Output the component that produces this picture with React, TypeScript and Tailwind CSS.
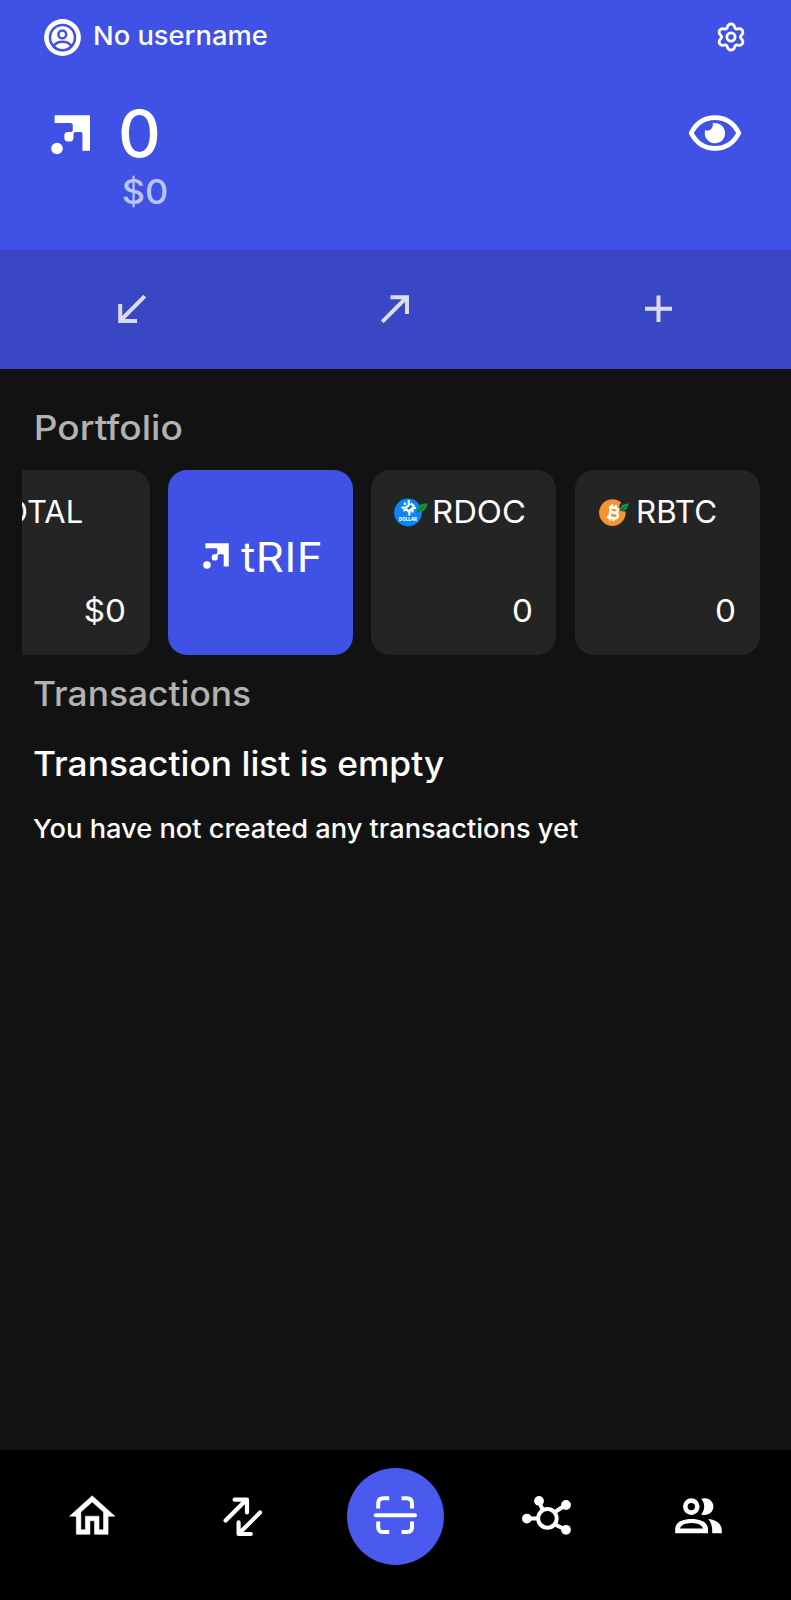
import type { ReactNode } from "react";

function RifLogo({ className }: { className: string }) {
  return (
    <svg viewBox="0 0 118 118" className={className} fill="white">
      <path d="M11 1H117V107H94V56Q94 51 89 51H74Q67 51 67 58V69Q67 79 57 79H50Q40 79 40 69V61Q40 51 50 51H57Q65 51 65 43V30Q65 24 59 24H11Z" />
      <circle cx="18" cy="100" r="17.3" />
    </svg>
  );
}

function Avatar() {
  return (
    <svg viewBox="0 0 37 37" className="size-[37px]" fill="none" stroke="#4051e5">
      <circle cx="18.5" cy="18.5" r="18.4" fill="white" stroke="none" />
      <circle cx="18.5" cy="18.5" r="12.5" strokeWidth="2.5" />
      <circle cx="18.3" cy="15.4" r="3.9" strokeWidth="2.5" />
      <path d="M9.8 26.6C12 23.8 15 22.7 18.5 22.7S25 23.8 27.2 26.6" strokeWidth="2.4" />
      <path d="M12 28Q18.5 24.4 25 28L23.4 30H13.6Z" fill="white" stroke="none" />
      <path d="M8.8 26.6A12.5 12.5 0 0 0 28.2 26.6" strokeWidth="2.5" />
    </svg>
  );
}

const gearPath =
  Array.from({ length: 73 }, (_, i) => {
    const a = (i / 72) * Math.PI * 2;
    const r = 11.5 + 1.9 * Math.cos(6 * a) - 0.25 * Math.cos(12 * a);
    return `${i ? "L" : "M"}${(16 + r * Math.sin(a)).toFixed(2)} ${(16 - r * Math.cos(a)).toFixed(2)}`;
  }).join("") + "Z";

function Gear() {
  return (
    <svg viewBox="0 0 32 32" className="mr-[1px] mb-[1px] size-8" fill="none" stroke="white" strokeWidth="2.8" strokeLinejoin="round">
      <path d={gearPath} />
      <circle cx="16" cy="16" r="4.1" />
    </svg>
  );
}

function Eye() {
  return (
    <svg viewBox="0 0 54 38" className="h-[38px] w-[54px]">
      <path
        d="M3.2 19C8 9.5 16.5 3.6 27 3.6S46 9.5 50.8 19C46 28.5 37.5 34.4 27 34.4S8 28.5 3.2 19Z"
        fill="none"
        stroke="white"
        strokeWidth="4.8"
        strokeLinejoin="round"
      />
      <path d="M24.6 9.2A10.2 10.2 0 1 1 17.2 16C20.6 18.2 26.2 14.2 24.6 9.2Z" fill="white" />
    </svg>
  );
}

function DocCoin() {
  return (
    <svg viewBox="0 0 34 30" className="h-[30px] w-[34px]">
      <circle cx="14" cy="15.5" r="13.9" fill="#0b86f5" />
      <g fill="none" stroke="white" strokeWidth="2.2">
        <path d="M14.8 3V8L11.2 11.2M7.5 10.6H12M20.5 9.6L16.6 6.4M11 5.5V8M9 13.5L13 12.6L15 15M15.4 18.5V14L19.5 10.6M18.6 15.5V12.4M22 11H18" />
      </g>
      <text x="14" y="24" textAnchor="middle" textLength="18" lengthAdjust="spacingAndGlyphs" fontSize="5" fontWeight="800" fill="white">
        DOLLAR
      </text>
      <path d="M23.8 14.4C23 8.8 26.5 6.6 33.4 6.2C32.6 12.4 29.3 15.6 23.8 14.4Z" fill="#129a36" />
      <path d="M23 15.6L30.4 8.6" stroke="#07501c" strokeWidth="1" />
    </svg>
  );
}

function BtcCoin() {
  return (
    <svg viewBox="0 0 30 28" className="h-[28px] w-[30px]">
      <circle cx="13.4" cy="14.6" r="13.3" fill="#f69432" />
      <g fill="none" stroke="white" transform="rotate(10 13.6 14.6)">
        <path d="M9 9.4H15.2C19.2 9.4 19.2 14.4 15.2 14.4H11.6H15.8C20.4 14.4 20.4 20 15.8 20H8.6M11.2 9.4V20" strokeWidth="2.5" />
        <path d="M12 6.4V9.4M15.6 6.4V9.4M12 20V23M15.6 20V23" strokeWidth="1.9" />
      </g>
      <circle cx="25.5" cy="8.6" r="5" fill="#242424" />
      <path d="M21.6 12.4C21 7.8 23.8 6.1 29.6 5.6C28.8 10.8 26.2 13.4 21.6 12.4Z" fill="#129a4a" />
      <path d="M21.2 13L27.2 7.4" stroke="#07501c" strokeWidth="1" />
    </svg>
  );
}

function Action({ label, d }: { label: string; d: string }) {
  return (
    <button aria-label={label} className="flex flex-1 items-center justify-center">
      <svg viewBox="0 0 32 32" className="size-8" fill="none" stroke="#dadcf0" strokeWidth="4">
        <path d={d} />
      </svg>
    </button>
  );
}

function TokenCard({ icon, name, value, className }: { icon?: ReactNode; name: ReactNode; value: string; className: string }) {
  return (
    <div className={`flex h-[185px] w-[185px] shrink-0 flex-col justify-between rounded-[19px] bg-[#242424] pt-[22px] pr-[23.5px] pb-[24px] text-[31px] leading-[40px] ${className}`}>
      <div className="flex items-center">
        {icon}
        {name}
      </div>
      <div className="origin-right scale-x-[1.07] text-right">{value}</div>
    </div>
  );
}

function NavItem({ label, children }: { label: string; children: ReactNode }) {
  return (
    <button aria-label={label} className="flex flex-1 items-center justify-center">
      {children}
    </button>
  );
}

export default function App() {
  return (
    <div className="flex h-[1600px] w-full flex-col overflow-hidden bg-[#121212] font-['Inter',sans-serif] text-white">
      <header className="h-[250px] bg-[#4051e5]">
        <div className="flex h-[75px] items-center justify-between pr-[43px] pl-[44px]">
          <div className="flex items-center">
            <Avatar />
            <span className="mb-1 ml-[11.5px] origin-left scale-x-[1.05] text-[26px] leading-[36px] font-medium">No username</span>
          </div>
          <Gear />
        </div>
        <div className="flex items-start justify-between pr-[49px] pl-[50.5px]">
          <div className="flex">
            <RifLogo className="mt-[40px] size-[39.5px]" />
            <div className="ml-[27.5px] pt-[18.5px]">
              <div className="origin-left scale-x-[1.04] text-[64px] leading-[80px] font-medium">0</div>
              <div className="-mt-[2px] origin-left scale-x-[1.06] pl-[3.5px] text-[34px] leading-[40px] font-medium text-[#bcc3fb]">$0</div>
            </div>
          </div>
          <div className="mt-[39px]">
            <Eye />
          </div>
        </div>
      </header>

      <div className="flex h-[119px] bg-[#3a47c4] pb-[2px]">
        <Action label="Receive" d="M28.8 3.2L5 27M4.2 11V28H21" />
        <Action label="Send" d="M2.2 28.8L26 5M10.5 4.2H27V21" />
        <Action label="Add" d="M15.5 2.5V29M2 15.7H29" />
      </div>

      <main className="flex-1 pt-[36px]">
        <h2 className="origin-left scale-x-[1.09] pl-[31px] text-[34px] leading-[46px] font-medium text-[#b2b2b2]">Portfolio</h2>
        <div className="mt-[18.5px] ml-[22px] overflow-hidden">
          <div className="-ml-[57.4px] flex gap-[18.4px]">
            <TokenCard className="pl-[20.5px]" name="TOTAL" value="$0" />
            <div className="flex h-[185px] w-[185px] shrink-0 items-center rounded-[19px] bg-[#4051e5] pb-[12px] pl-[34.5px]">
              <RifLogo className="size-[26px]" />
              <span className="mt-[3px] ml-[12px] origin-left scale-x-[1.07] text-[41px] tracking-[0.4px]">tRIF</span>
            </div>
            <TokenCard
              className="pl-[22.5px]"
              icon={<DocCoin />}
              name={<span className="ml-[4px] origin-left scale-x-[1.06]">RDOC</span>}
              value="0"
            />
            <TokenCard
              className="pl-[24.5px]"
              icon={<span className="mt-[1px]"><BtcCoin /></span>}
              name={<span className="ml-[6.5px] origin-left scale-x-[1.01]">RBTC</span>}
              value="0"
            />
          </div>
        </div>
        <div className="pl-[33px] font-medium">
          <h2 className="mt-[16px] origin-left scale-x-[1.04] text-[34px] leading-[46px] text-[#b2b2b2]">Transactions</h2>
          <h3 className="mt-[24px] origin-left scale-x-[1.04] text-[34px] leading-[46px]">Transaction list is empty</h3>
          <p className="mt-[22.5px] origin-left scale-x-[1.047] text-[26px] leading-[40px]">You have not created any transactions yet</p>
        </div>
      </main>

      <nav className="flex h-[150px] bg-black px-4 pb-[17px]">
        <NavItem label="Home">
          <svg viewBox="0 0 24 24" className="size-[54.4px]" fill="white" stroke="white" strokeWidth="0.25">
            <path d="M12 5.69l5 4.5V18h-2v-6H9v6H7v-7.81l5-4.5M12 3L2 12h3v8h6v-6h2v6h6v-8h3L12 3z" />
          </svg>
        </NavItem>
        <NavItem label="Transactions">
          <svg viewBox="0 0 40 40" className="mr-[2px] size-10" fill="none" stroke="white" strokeWidth="4.2" strokeLinecap="round" strokeLinejoin="round">
            <path d="M2.6 23.5L22.6 3.5M11.6 2.7H24V15.4" />
            <path d="M37 15.6L17 35.6M15.6 25.4V37H27.8" />
          </svg>
        </NavItem>
        <NavItem label="Scan">
          <span className="flex size-[97px] items-center justify-center rounded-full bg-[#4a5aee]">
            <svg viewBox="0 0 44 44" className="size-11" fill="none" stroke="white" strokeWidth="4">
              <path d="M5.2 13.5V8.5Q5.2 3.3 10.4 3.3H16.2M28.6 3.3H33.8Q39 3.3 39 8.5V13.5M39 26.5V31.9Q39 37.1 33.8 37.1H28.6M16.2 37.1H10.4Q5.2 37.1 5.2 31.9V26.5" />
              <path d="M2.8 20.2H42" strokeLinecap="round" />
            </svg>
          </span>
        </NavItem>
        <NavItem label="Network">
          <svg viewBox="0 0 50 42" className="h-[42px] w-[50px]" fill="white">
            <g stroke="white" strokeWidth="4">
              <path d="M20.5 13.5L16.8 4.9M33 16L43.6 9M33 28.5L43.6 33.8M4.6 22.6H15" />
              <circle cx="25.4" cy="22.4" r="9.3" fill="none" />
            </g>
            <circle cx="17" cy="4.9" r="4.9" />
            <circle cx="44" cy="9" r="4.9" />
            <circle cx="44" cy="33.8" r="4.9" />
            <circle cx="4.9" cy="22.6" r="4.9" />
          </svg>
        </NavItem>
        <NavItem label="Contacts">
          <svg viewBox="0 0 47 36" className="mr-[2px] mb-[2px] h-[36px] w-[47px]" fill="white">
            <circle cx="16.3" cy="8.6" r="6" fill="none" stroke="white" strokeWidth="4.6" />
            <path d="M26.2 0.8C34 -1.4 38.4 3.8 38.4 8.6S34 18.6 26.2 16.4C30.2 11.6 30.2 5.6 26.2 0.8Z" />
            <path fillRule="evenodd" d="M0.2 35.3V31.4C0.2 24 7.6 21 16.5 21S33 24 33 31.4V35.3ZM5 30.6H28C27 26.6 22 25.1 16.5 25.1S6 26.6 5 30.6Z" />
            <path d="M33.2 21C41.6 21.6 46.8 26.4 46.8 32.4V35.3H37.2V32.4C37.2 27.8 35.8 24.2 33.2 21Z" />
          </svg>
        </NavItem>
      </nav>
    </div>
  );
}
